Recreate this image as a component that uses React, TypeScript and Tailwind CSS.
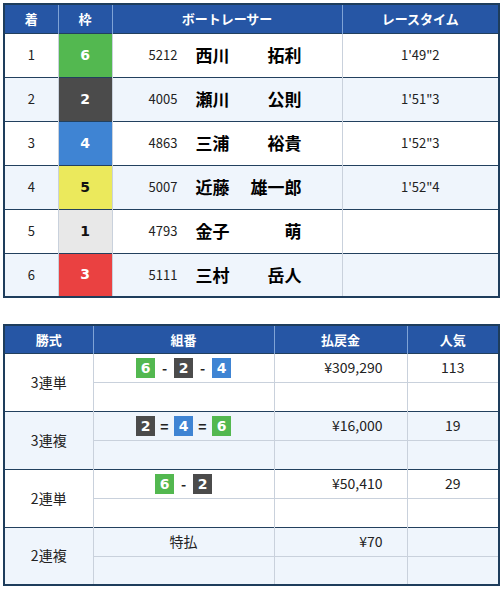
import React from "react";

type Racer = {
  place: number;
  frame: number;
  reg: string;
  sei: string;
  mei: string;
  time: string;
};

const racers: Racer[] = [
  { place: 1, frame: 6, reg: "5212", sei: "西川", mei: "拓利", time: "1'49\"2" },
  { place: 2, frame: 2, reg: "4005", sei: "瀬川", mei: "公則", time: "1'51\"3" },
  { place: 3, frame: 4, reg: "4863", sei: "三浦", mei: "裕貴", time: "1'52\"3" },
  { place: 4, frame: 5, reg: "5007", sei: "近藤", mei: "雄一郎", time: "1'52\"4" },
  { place: 5, frame: 1, reg: "4793", sei: "金子", mei: "萌", time: "" },
  { place: 6, frame: 3, reg: "5111", sei: "三村", mei: "岳人", time: "" },
];

const frameColor: Record<number, string> = {
  1: "bg-[#e8e8e8] text-[#111]",
  2: "bg-[#4b4b4b] text-white",
  3: "bg-[#ea4141] text-white",
  4: "bg-[#3f84d3] text-white",
  5: "bg-[#ebe95c] text-[#111]",
  6: "bg-[#53b850] text-white",
};

type Payout = {
  kind: string;
  combo: number[] | null;
  sep: string;
  amount: string;
  pop: string;
};

const payouts: Payout[] = [
  { kind: "3連単", combo: [6, 2, 4], sep: "-", amount: "¥309,290", pop: "113" },
  { kind: "3連複", combo: [2, 4, 6], sep: "=", amount: "¥16,000", pop: "19" },
  { kind: "2連単", combo: [6, 2], sep: "-", amount: "¥50,410", pop: "29" },
  { kind: "2連複", combo: null, sep: "=", amount: "¥70", pop: "" },
];

const font = { fontFamily: '"Noto Sans CJK JP", "Noto Sans", sans-serif' };

function Combo({ combo, sep }: { combo: number[]; sep: string }) {
  return (
    <div className="flex items-center justify-center">
      {combo.map((n, i) => (
        <React.Fragment key={i}>
          {i > 0 && (
            <span className="w-[19px] text-center text-[14px] font-bold leading-none text-[#222]">
              {sep}
            </span>
          )}
          <span
            className={`flex h-[20px] w-[19px] items-center justify-center text-[14px] font-bold leading-none ${frameColor[n]}`}
            style={{ fontFamily: '"DejaVu Sans", sans-serif' }}
          >
            {n}
          </span>
        </React.Fragment>
      ))}
    </div>
  );
}

export default function App() {
  const head = "bg-[#2656a5] text-white text-[13px] font-bold";
  return (
    <div className="h-[592px] overflow-hidden bg-white pl-[3px] pt-[3px] text-[#222]" style={font}>
      {/* 着順 */}
      <table className="w-[495px] table-fixed border-collapse border-2 border-[#1e3d5c]">
        <colgroup>
          <col className="w-[54px]" />
          <col className="w-[54px]" />
          <col className="w-[230px]" />
          <col className="w-[157px]" />
        </colgroup>
        <thead>
          <tr className={`h-[29px] ${head}`}>
            <th className="border-r border-[#7fa3d6]">着</th>
            <th className="border-r border-[#7fa3d6]">枠</th>
            <th className="border-r border-[#7fa3d6]">ボートレーサー</th>
            <th>レースタイム</th>
          </tr>
        </thead>
        <tbody>
          {racers.map((r, i) => (
            <tr
              key={r.place}
              className={`h-[44px] border-t border-[#22405e] ${i % 2 ? "bg-[#eff5fc]" : "bg-white"}`}
            >
              <td className="border-r border-[#c9d1dc] text-center text-[13px]">{r.place}</td>
              <td
                className={`border-r border-[#c9d1dc] text-center text-[14px] font-bold ${frameColor[r.frame]}`}
                style={{ fontFamily: '"DejaVu Sans", sans-serif' }}
              >
                {r.frame}
              </td>
              <td className="border-r border-[#c9d1dc]">
                <div className="flex items-center pl-[36px]">
                  <span className="w-[47px] text-[13px]">{r.reg}</span>
                  <span className="flex w-[106px] justify-between text-[17px] font-bold text-black">
                    <span>{r.sei}</span>
                    <span>{r.mei}</span>
                  </span>
                </div>
              </td>
              <td className="text-center text-[13px]">{r.time}</td>
            </tr>
          ))}
        </tbody>
      </table>

      {/* 払戻金 */}
      <table className="mt-[26px] w-[495px] table-fixed border-collapse border-2 border-[#1e3d5c]">
        <colgroup>
          <col className="w-[89px]" />
          <col className="w-[181px]" />
          <col className="w-[133px]" />
          <col className="w-[92px]" />
        </colgroup>
        <thead>
          <tr className={`h-[28px] ${head}`}>
            <th className="border-r border-[#7fa3d6]">勝式</th>
            <th className="border-r border-[#7fa3d6]">組番</th>
            <th className="border-r border-[#7fa3d6]">払戻金</th>
            <th>人気</th>
          </tr>
        </thead>
        {payouts.map((p, i) => (
          <tbody
            key={p.kind}
            className={`border-t border-[#22405e] ${i % 2 ? "bg-[#eff5fc]" : "bg-white"}`}
          >
            <tr className="h-[29px]">
              <td rowSpan={2} className="border-r border-[#c9d1dc] text-center text-[14px]">
                {p.kind}
              </td>
              <td className="border-r border-b border-[#c9d1dc] text-center text-[14px]">
                {p.combo ? <Combo combo={p.combo} sep={p.sep} /> : "特払"}
              </td>
              <td className="border-r border-b border-[#c9d1dc] pr-[24px] text-right text-[14px]">
                {p.amount}
              </td>
              <td className="border-b border-[#c9d1dc] text-center text-[14px]">{p.pop}</td>
            </tr>
            <tr className="h-[29px]">
              <td className="border-r border-[#c9d1dc]" />
              <td className="border-r border-[#c9d1dc]" />
              <td />
            </tr>
          </tbody>
        ))}
      </table>
    </div>
  );
}
